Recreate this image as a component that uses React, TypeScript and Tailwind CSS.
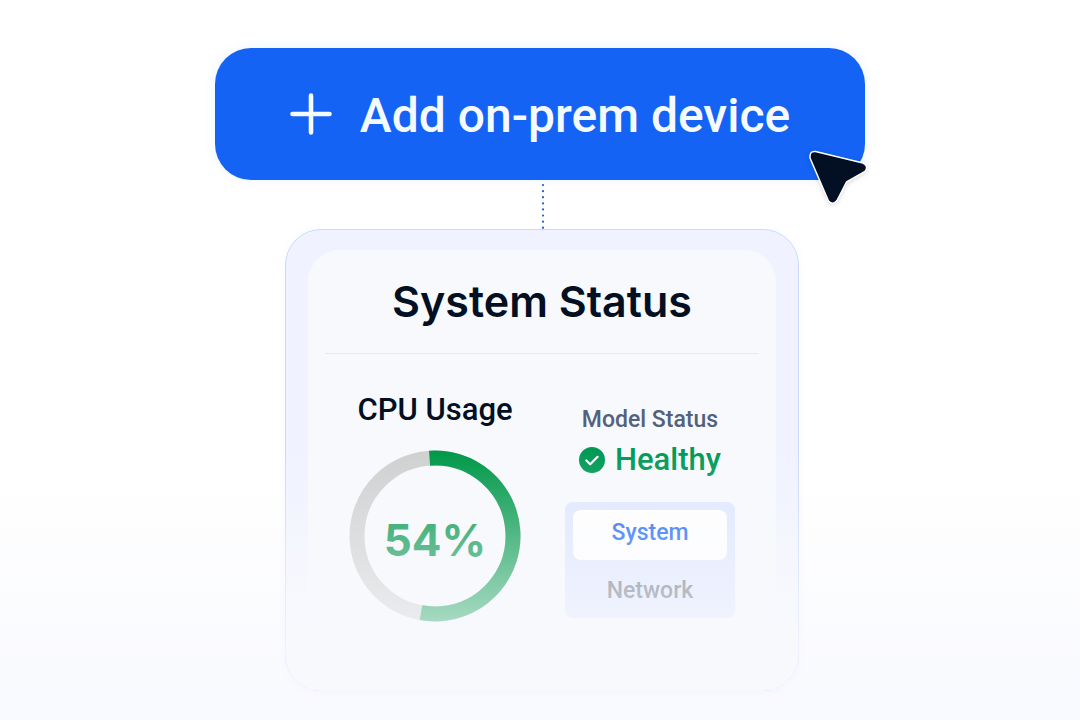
import { useState } from 'react'

const tabs = ['System', 'Network']

function UsageRing({ percent }: { percent: number }) {
  return (
    <div className="relative mt-5 size-[172px]">
      <svg viewBox="0 0 172 172" className="size-full" fill="none" strokeWidth="15">
        <circle cx="86" cy="86" r="78" stroke="#cfd0d0" />
        <circle
          cx="86"
          cy="86"
          r="78"
          stroke="#009849"
          pathLength="100"
          strokeDasharray={`${percent} 100`}
          transform="rotate(-94 86 86)"
        />
      </svg>
      <span className="absolute inset-0 flex items-center justify-center pt-2 font-['Inter'] text-[44px] font-bold text-[#00954a]">
        {percent}%
      </span>
    </div>
  )
}

function HealthIcon() {
  return (
    <svg width="26" height="26" viewBox="0 0 26 26" fill="none">
      <circle cx="13" cy="13" r="13" fill="#009955" />
      <path d="M7.3 13.5l3.9 3.8 7.4-7.5" stroke="#fff" strokeWidth="2.2" strokeLinecap="round" strokeLinejoin="round" />
    </svg>
  )
}

function Pointer() {
  return (
    <svg
      className="pointer-events-none absolute -right-1 -bottom-7 drop-shadow-sm"
      width="62"
      height="60"
      viewBox="0 0 62 60"
    >
      <path
        d="M8.5 3.5L56 15Q62 18 58 23.5L39.5 34L30 52.5Q26 57.5 21.5 53L3 10Q2.5 2.5 8.5 3.5Z"
        fill="#030f22"
        stroke="#fff"
        strokeWidth="1.5"
        strokeLinejoin="round"
      />
    </svg>
  )
}

export default function App() {
  const [active, setActive] = useState('System')

  return (
    <main className="flex min-h-screen flex-col items-center bg-linear-to-b from-white from-65% to-[#f8f9fe] px-4 pt-12 font-['Roboto',sans-serif] font-medium">
      <div className="relative w-full max-w-[650px]">
        <button className="flex h-33 w-full items-center justify-center gap-7 rounded-[36px] bg-[#1463f4] text-5xl font-medium text-[#f5faff] shadow-[0_0_12px_#1463f414]">
          <svg width="42" height="42" viewBox="0 0 42 42" stroke="currentColor" strokeWidth="4.6" strokeLinecap="round">
            <path d="M21 2.5v37M2.5 21h37" />
          </svg>
          <span className="pt-1">Add on-prem device</span>
        </button>
        <Pointer />
      </div>

      <div className="flex w-full flex-col items-center pl-1">
        <svg width="4" height="49" viewBox="0 0 4 49" className="ml-0.5">
          <path d="M2 5v44" stroke="#2160e4" strokeWidth="2.2" strokeLinecap="round" strokeDasharray="0.1 6" />
        </svg>

        <section className="relative w-full max-w-[514px] rounded-[36px] border border-[#cbdafb] bg-linear-to-b from-[#f0f3ff] from-60% to-[#f7f9fd] to-85% px-[22px] pt-5 shadow-[0_0_10px_#1463f408]">
          <div className="h-110 rounded-t-[32px] bg-[#f7f9fd] px-[17px]">
            <h1 className="flex h-26 items-center justify-center border-b border-[#e6e9ef] font-['Inter'] text-[43px] font-semibold text-[#030f22]">
              System Status
            </h1>

            <div className="flex justify-between px-6">
              <div className="flex flex-col items-center">
                <h2 className="mt-9 text-[31px] leading-10 text-[#030f22]">CPU Usage</h2>
                <UsageRing percent={54} />
              </div>

              <div className="flex w-[170px] flex-col items-center">
                <p className="mt-12 text-[23px] leading-9 text-[#53617c]">Model Status</p>
                <p className="flex items-center gap-2.5 text-[31px] leading-11 text-[#009955]">
                  <HealthIcon />
                  Healthy
                </p>
                <div className="mt-5 flex w-full flex-col gap-2 rounded-lg bg-[#dfe7ff] p-2">
                  {tabs.map((tab) => (
                    <button
                      key={tab}
                      onClick={() => setActive(tab)}
                      className={
                        tab === active
                          ? 'h-[50px] rounded-lg bg-white pb-1 text-[23px] text-[#1463f4]'
                          : 'h-[42px] pt-1 text-[23px] text-[#626c7c]'
                      }
                    >
                      {tab}
                    </button>
                  ))}
                </div>
              </div>
            </div>
          </div>
          {/* fades the lower half of the card, border included, into the page */}
          <div className="pointer-events-none absolute -inset-x-px -bottom-px h-60 rounded-b-[36px] bg-linear-to-b from-[#f8f9fd]/0 to-[#f8f9fd]/95" />
        </section>
      </div>
    </main>
  )
}
